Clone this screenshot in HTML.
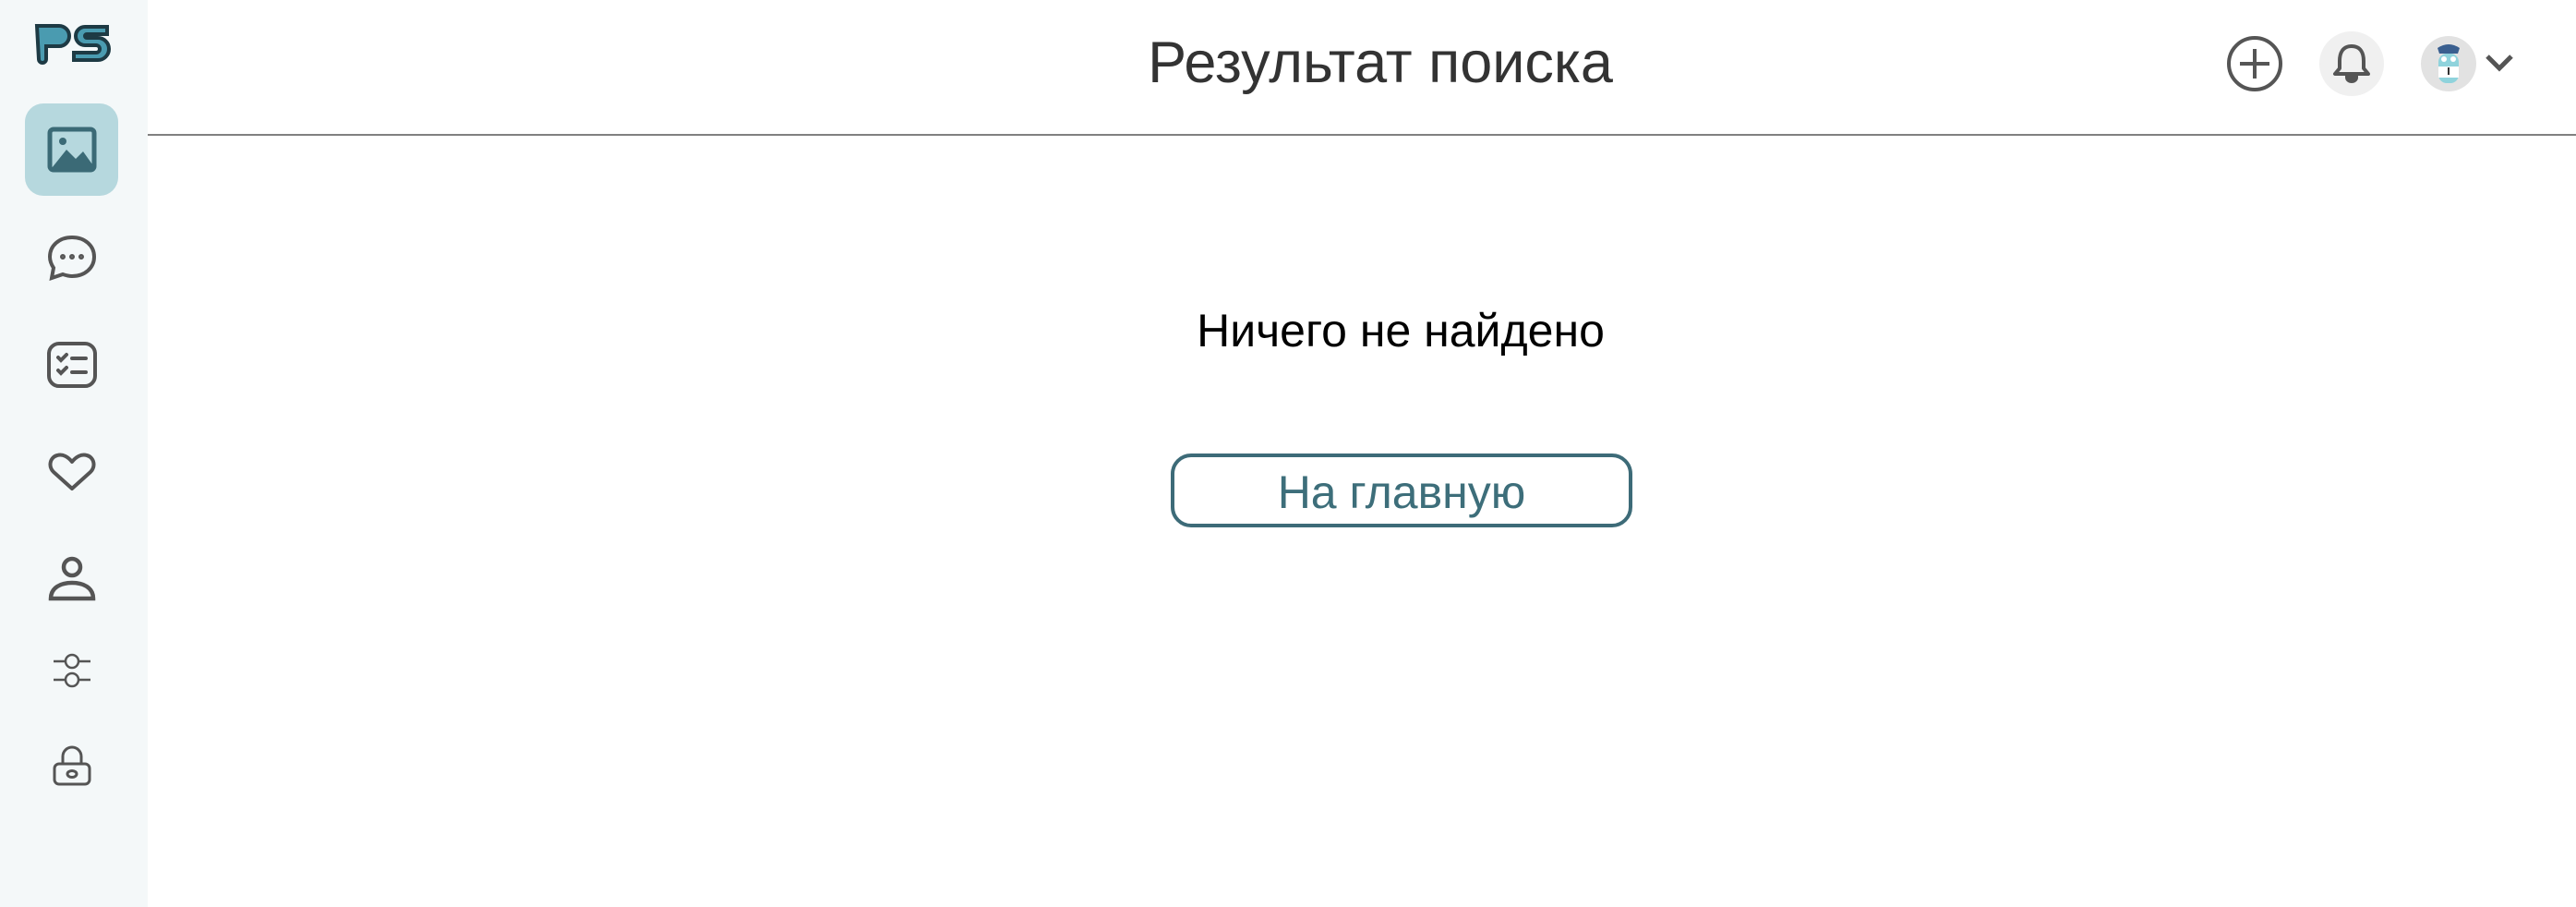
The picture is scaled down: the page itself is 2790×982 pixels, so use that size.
<!DOCTYPE html>
<html><head><meta charset="utf-8"><style>
*{margin:0;padding:0;box-sizing:border-box}
body{width:2790px;height:982px;background:#fff;font-family:"Liberation Sans",sans-serif;position:relative;overflow:hidden}
.side{position:absolute;left:0;top:0;width:160px;height:982px;background:#f4f8f9}
.act{position:absolute;left:27px;top:112px;width:101px;height:100px;background:#b6d8de;border-radius:20px}
.ic{position:absolute;left:50px;width:56px;height:56px}
.hl{position:absolute;left:160px;right:0;top:145px;height:2px;background:#808080}
.title{position:absolute;left:1195px;width:600px;top:32px;text-align:center;font-size:63px;color:#333;white-space:nowrap}
.msg{position:absolute;left:1217px;width:600px;top:329px;text-align:center;font-size:50px;color:#000;white-space:nowrap}
.btn{position:absolute;left:1268px;top:491px;width:500px;height:80px;border:4px solid #3d6b78;border-radius:22px;text-align:center;line-height:76px;font-size:50px;color:#3d6e7a}
</style></head><body>
<div class="side">
<svg style="position:absolute;left:34px;top:20px" width="90" height="50" viewBox="0 0 90 50">
<path d="M6 8 H30 a11 11 0 0 1 0 22 H16 V44 a4 4 0 0 1-8 0 Z" fill="#4a9bb0" stroke="#1d3a44" stroke-width="4"/>
<path d="M82 9 H58 a10 10 0 0 0 0 20 H70 a4 4 0 0 1 0 8 H46 V45 H72 a12 12 0 0 0 0-24 H60 a2 2 0 0 1 0-4 H82Z" fill="#4a9bb0" stroke="#1d3a44" stroke-width="4"/>
</svg>
<div class="act"></div>
<svg class="ic" style="top:134px" viewBox="0 0 56 56"><rect x="4" y="6" width="48" height="44" rx="4" fill="none" stroke="#3b6a76" stroke-width="5"/><path d="M6 48 L22 28 L32 38 L40 30 L50 44 V48Z" fill="#3b6a76"/><circle cx="18" cy="19" r="4" fill="#3b6a76"/></svg>
<svg class="ic" style="top:251px" viewBox="0 0 56 56" fill="none" stroke="#555" stroke-width="4"><path d="M28 6 C14 6 4 15 4 27 c0 5 2 9 4 12 l-2 11 12-4 c3 1 6 2 10 2 14 0 24-9 24-21 S42 6 28 6Z"/><circle cx="18" cy="27" r="1" fill="#555"/><circle cx="28" cy="27" r="1" fill="#555"/><circle cx="38" cy="27" r="1" fill="#555"/></svg>
<svg class="ic" style="top:367px" viewBox="0 0 56 56" fill="none" stroke="#555" stroke-width="4" stroke-linecap="round"><rect x="3" y="5" width="50" height="46" rx="11"/><path d="M13 20 l3 3 6-6 M13 34 l3 3 6-6 M28 21 H43 M28 36 H43"/></svg>
<svg class="ic" style="top:483px" viewBox="0 0 56 56" fill="none" stroke="#555" stroke-width="4" stroke-linejoin="round"><path d="M28 46 L8 28 C2 22 4 12 12 10 c6-2 12 2 16 7 4-5 10-9 16-7 8 2 10 12 4 18Z"/></svg>
<svg class="ic" style="top:598px" viewBox="0 0 56 56" fill="none" stroke="#555" stroke-width="4.5"><circle cx="28" cy="16" r="9"/><path d="M5 50 C5 38 16 33 28 33 S51 38 51 50Z"/></svg>
<svg class="ic" style="top:698px" viewBox="0 0 56 56" fill="none" stroke="#555" stroke-width="2.5"><path d="M8 18 H20 M36 18 H48 M8 38 H20 M36 38 H48"/><circle cx="28" cy="18" r="7"/><circle cx="28" cy="38" r="7"/></svg>
<svg class="ic" style="top:799px" viewBox="0 0 56 56" fill="none" stroke="#555" stroke-width="3"><path d="M18 28 V20 a10 10 0 0 1 20 0 V28"/><rect x="9" y="28" width="38" height="22" rx="5"/><ellipse cx="28" cy="39" rx="5" ry="3.5"/></svg>
</div>
<div class="hl"></div>
<div class="title">Результат поиска</div>
<svg style="position:absolute;left:2410px;top:37px" width="64" height="64" viewBox="0 0 64 64" fill="none" stroke="#555" stroke-width="4"><circle cx="32" cy="32" r="28"/><path d="M32 16 V48 M16 32 H48"/></svg>
<div style="position:absolute;left:2512px;top:34px;width:70px;height:70px;border-radius:50%;background:#f0f0f0"></div>
<svg style="position:absolute;left:2522px;top:44px" width="50" height="50" viewBox="0 0 50 50" fill="none" stroke="#555" stroke-width="4"><path d="M25 6 C15 6 12 14 12 22 V30 L7 36 H43 L38 30 V22 C38 14 35 6 25 6Z" stroke-linejoin="round"/><path d="M20 40 a5 4 0 0 0 10 0Z" fill="#555"/></svg>
<div style="position:absolute;left:2622px;top:39px;width:60px;height:60px;border-radius:50%;background:#e2e2e2"></div>
<svg style="position:absolute;left:2632px;top:42px" width="40" height="56" viewBox="0 0 40 56"><path d="M8 10 Q20 2 32 10 L30 16 H10Z" fill="#3a5f8f"/><rect x="9" y="16" width="22" height="32" rx="9" fill="#8fd3dc"/><rect x="9" y="30" width="22" height="12" fill="#fff"/><circle cx="15" cy="22" r="3" fill="#fff"/><circle cx="25" cy="22" r="3" fill="#fff"/><path d="M20 31 v8" stroke="#333" stroke-width="2"/></svg>
<svg style="position:absolute;left:2690px;top:56px" width="34" height="24" viewBox="0 0 34 24" fill="none" stroke="#555" stroke-width="5"><path d="M4 5 L17 18 L30 5"/></svg>
<div class="msg">Ничего не найдено</div>
<div class="btn">На главную</div>
</body></html>
